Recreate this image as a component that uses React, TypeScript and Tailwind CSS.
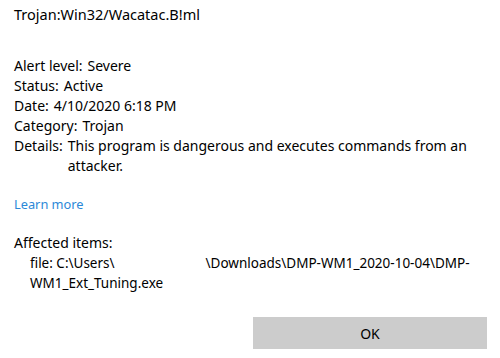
const font = { fontFamily: '"Noto Sans", "Liberation Sans", sans-serif' };

function Row({ label, value }: { label: string; value: string }) {
  return (
    <div className="flex leading-[20px]">
      <span className="shrink-0 mr-[5px]">{label}</span>
      <span>{value}</span>
    </div>
  );
}

export default function App() {
  return (
    <div className="w-[500px] h-[358px] bg-white text-black flex flex-col px-[14px]" style={font}>
      <div className="pt-[5px] text-[14.5px] leading-[18px]">Trojan:Win32/Wacatac.B!ml</div>

      <div className="mt-[33px] text-[14px]">
        <Row label="Alert level:" value="Severe" />
        <Row label="Status:" value="Active" />
        <Row label="Date:" value="4/10/2020 6:18 PM" />
        <Row label="Category:" value="Trojan" />
        <Row label="Details:" value="This program is dangerous and executes commands from an attacker." />
      </div>

      <a href="#" className="mt-[18px] text-[12.8px] leading-[20px] text-[#2b88d8] self-start">
        Learn more
      </a>

      <div className="mt-[19px] text-[14px] leading-[20px]">Affected items:</div>
      <div className="pl-[16px] text-[13.5px] leading-[20px]">
        file: C:\Users\<span className="inline-block w-[91px]"></span>\Downloads\DMP-WM1_2020-10-04\DMP-
        <br />
        WM1_Ext_Tuning.exe
      </div>

      <div className="mt-auto mb-[9px] flex justify-end -mr-[1px]">
        <button className="w-[234px] h-[32px] bg-[#cccccc] text-[14px] text-black">OK</button>
      </div>
    </div>
  );
}
